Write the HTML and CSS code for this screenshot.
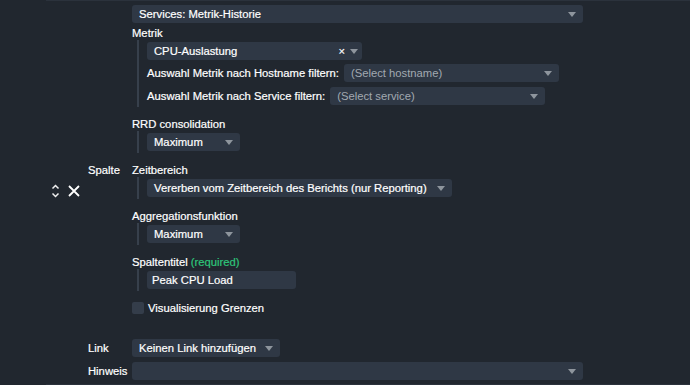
FILE: index.html
```html
<!DOCTYPE html>
<html lang="de">
  <head>
    <meta charset="UTF-8" />
    <meta name="viewport" content="width=device-width, initial-scale=1.0" />
    <title>Spalte bearbeiten</title>
    <link rel="stylesheet" href="styles.css">
  </head>
  <body>
    <!-- Spalten-Editor -->
    <main class="form">
      <div class="main-cell">
        <div class="select w-wide"><span>Services: Metrik-Historie</span><i class="caret"></i></div>
      </div>

      <!-- Metrik -->
      <section class="main-cell field first">
        <div class="field-label">Metrik</div>
        <div class="field-body">
          <div class="select w-mid tight"><span>CPU-Auslastung</span><b class="clear">×</b><i class="caret"></i></div>
          <div class="filter-row">
            <label>Auswahl Metrik nach Hostname filtern:</label>
            <div class="select w-mid placeholder"><span>(Select hostname)</span><i class="caret"></i></div>
          </div>
          <div class="filter-row">
            <label>Auswahl Metrik nach Service filtern:</label>
            <div class="select w-mid placeholder"><span>(Select service)</span><i class="caret"></i></div>
          </div>
        </div>
      </section>

      <section class="main-cell field">
        <div class="field-label">RRD consolidation</div>
        <div class="field-body">
          <div class="select w-small"><span>Maximum</span><i class="caret"></i></div>
        </div>
      </section>

      <!-- Zeile mit Spalten-Aktionen -->
      <div class="actions">
        <svg width="9" height="14" viewBox="0 0 9 14" class="icon-sort">
          <path d="M1.5 4.5 L4.5 1.5 L7.5 4.5 M1.5 9.5 L4.5 12.5 L7.5 9.5" fill="none" stroke="#f0f0f0" stroke-width="1.5" />
        </svg>
        <svg width="12" height="12" viewBox="0 0 12 12" class="icon-close">
          <path d="M1 1 L11 11 M11 1 L1 11" fill="none" stroke="#ffffff" stroke-width="1.8" />
        </svg>
      </div>
      <div class="row-label spalte">Spalte</div>
      <section class="main-cell field">
        <div class="field-label">Zeitbereich</div>
        <div class="field-body">
          <div class="select w-time"><span>Vererben vom Zeitbereich des Berichts (nur Reporting)</span><i class="caret"></i></div>
        </div>
      </section>

      <section class="main-cell field">
        <div class="field-label">Aggregationsfunktion</div>
        <div class="field-body">
          <div class="select w-small"><span>Maximum</span><i class="caret"></i></div>
        </div>
      </section>

      <section class="main-cell field">
        <div class="field-label">Spaltentitel <em class="required">(required)</em></div>
        <div class="field-body">
          <input type="text" class="text-input" value="Peak CPU Load" />
        </div>
      </section>

      <div class="main-cell check-row">
        <span class="checkbox"></span>
        <span>Visualisierung Grenzen</span>
      </div>

      <!-- Link / Hinweis -->
      <div class="row-label link-label">Link</div>
      <div class="main-cell link-cell">
        <div class="select w-link"><span>Keinen Link hinzufügen</span><i class="caret"></i></div>
      </div>

      <div class="row-label">Hinweis</div>
      <div class="main-cell">
        <div class="select w-wide"><span></span><i class="caret"></i></div>
      </div>
    </main>
  </body>
</html>
```

FILE: styles.css
```css
body {
  margin: 0;
  height: 385px;
  overflow: hidden;
  background-color: #21272f;
  color: #ffffff;
  font-family: "Liberation Sans", Arial, sans-serif;
  font-size: 11.25px;
  -webkit-text-stroke: 0.2px;
}

.form {
  display: grid;
  grid-template-columns: 42px 44px 1fr;
  align-items: start;
  margin-left: 46px;
  padding: 4px 0 4px;
  border-top: 1px solid #2b323c;
  border-bottom: 1px solid #2b323c;
}

.main-cell {
  grid-column: 3;
}

.row-label {
  grid-column: 2;
  align-self: center;
}

.spalte {
  align-self: start;
  margin-top: 10px;
  line-height: 14px;
}

.actions {
  grid-column: 1;
  align-self: end;
  display: flex;
  align-items: center;
  gap: 8px;
  padding-left: 5px;
  margin-bottom: 1px;
}

/* Felder */
.field {
  margin-top: 10px;
}

.field.first {
  margin-top: 3px;
}

.field-label {
  line-height: 14px;
}

.required {
  font-style: normal;
  color: #2fc57a;
}

.field-body {
  display: flex;
  flex-direction: column;
  align-items: flex-start;
  gap: 4px;
  margin-left: 5px;
  padding: 2px 0 2px 8px;
  border-left: 2px solid #37404c;
}

.filter-row {
  display: flex;
  align-items: center;
  gap: 5px;
}

.filter-row + .filter-row {
  margin-top: 1px;
}

/* Auswahlfelder */
.select {
  display: flex;
  align-items: center;
  box-sizing: border-box;
  height: 18px;
  padding: 0 7px;
  background-color: #2f3845;
  border-radius: 3px;
  white-space: nowrap;
}

.select.tight {
  padding-right: 4px;
}

.select span {
  flex: 1;
}

.placeholder {
  color: #a2a9b1;
  -webkit-text-stroke: 0;
}

.caret {
  width: 0;
  height: 0;
  border-left: 4px solid transparent;
  border-right: 4px solid transparent;
  border-top: 5px solid #8e959d;
}

.clear {
  font-weight: normal;
  font-size: 11px;
  margin-right: 5px;
}

.w-wide {
  width: 451px;
}

.w-mid {
  width: 215px;
}

.w-small {
  width: 93px;
}

.w-time {
  width: 305px;
}

.w-link {
  width: 148px;
}

.text-input {
  box-sizing: border-box;
  width: 149px;
  height: 18px;
  padding: 0 5px;
  border: none;
  outline: none;
  border-radius: 3px;
  background-color: #2f3845;
  color: #ffffff;
  font: inherit;
  -webkit-text-stroke: 0.2px;
}

.check-row {
  display: flex;
  align-items: center;
  gap: 4px;
  margin-top: 11px;
}

.checkbox {
  width: 12px;
  height: 12px;
  border-radius: 2px;
  background-color: #343d4a;
}

.link-label,
.link-cell {
  margin-top: 25px;
}

.link-cell + .row-label,
.link-cell + .row-label + .main-cell {
  margin-top: 5px;
}
```
